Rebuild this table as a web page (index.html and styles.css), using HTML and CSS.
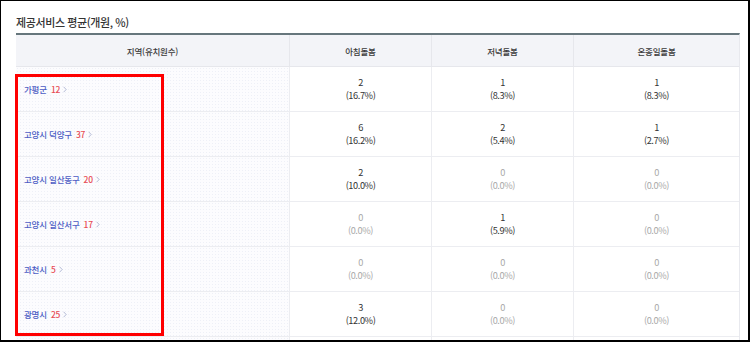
FILE: index.html
```html
<!DOCTYPE html>
<html lang="ko">
<head>
<meta charset="utf-8">
<link rel="stylesheet" href="styles.css">
</head>
<body>
<div class="frame">
  <h2 class="title">제공서비스 평균(개원, %)</h2>
  <div class="table">
    <div class="th">지역(유치원수)</div>
    <div class="th">아침돌봄</div>
    <div class="th">저녁돌봄</div>
    <div class="th last">온종일돌봄</div>

    <div class="td region"><span class="name">가평군</span><span class="cnt">12</span><svg class="chev" width="4" height="7" viewBox="0 0 4 7"><path d="M0.6 0.8 L3.2 3.5 L0.6 6.2" fill="none" stroke="currentColor" stroke-width="0.8"/></svg></div>
    <div class="td"><span>2</span><span>(16.7%)</span></div>
    <div class="td"><span>1</span><span>(8.3%)</span></div>
    <div class="td last"><span>1</span><span>(8.3%)</span></div>

    <div class="td region"><span class="name">고양시 덕양구</span><span class="cnt">37</span><svg class="chev" width="4" height="7" viewBox="0 0 4 7"><path d="M0.6 0.8 L3.2 3.5 L0.6 6.2" fill="none" stroke="currentColor" stroke-width="0.8"/></svg></div>
    <div class="td"><span>6</span><span>(16.2%)</span></div>
    <div class="td"><span>2</span><span>(5.4%)</span></div>
    <div class="td last"><span>1</span><span>(2.7%)</span></div>

    <div class="td region"><span class="name">고양시 일산동구</span><span class="cnt">20</span><svg class="chev" width="4" height="7" viewBox="0 0 4 7"><path d="M0.6 0.8 L3.2 3.5 L0.6 6.2" fill="none" stroke="currentColor" stroke-width="0.8"/></svg></div>
    <div class="td"><span>2</span><span>(10.0%)</span></div>
    <div class="td zero"><span>0</span><span>(0.0%)</span></div>
    <div class="td zero last"><span>0</span><span>(0.0%)</span></div>

    <div class="td region"><span class="name">고양시 일산서구</span><span class="cnt">17</span><svg class="chev" width="4" height="7" viewBox="0 0 4 7"><path d="M0.6 0.8 L3.2 3.5 L0.6 6.2" fill="none" stroke="currentColor" stroke-width="0.8"/></svg></div>
    <div class="td zero"><span>0</span><span>(0.0%)</span></div>
    <div class="td"><span>1</span><span>(5.9%)</span></div>
    <div class="td zero last"><span>0</span><span>(0.0%)</span></div>

    <div class="td region"><span class="name">과천시</span><span class="cnt">5</span><svg class="chev" width="4" height="7" viewBox="0 0 4 7"><path d="M0.6 0.8 L3.2 3.5 L0.6 6.2" fill="none" stroke="currentColor" stroke-width="0.8"/></svg></div>
    <div class="td zero"><span>0</span><span>(0.0%)</span></div>
    <div class="td zero"><span>0</span><span>(0.0%)</span></div>
    <div class="td zero last"><span>0</span><span>(0.0%)</span></div>

    <div class="td region"><span class="name">광명시</span><span class="cnt">25</span><svg class="chev" width="4" height="7" viewBox="0 0 4 7"><path d="M0.6 0.8 L3.2 3.5 L0.6 6.2" fill="none" stroke="currentColor" stroke-width="0.8"/></svg></div>
    <div class="td"><span>3</span><span>(12.0%)</span></div>
    <div class="td zero"><span>0</span><span>(0.0%)</span></div>
    <div class="td zero last"><span>0</span><span>(0.0%)</span></div>

    <div class="td region"></div>
    <div class="td"></div>
    <div class="td"></div>
    <div class="td last"></div>
  </div>
  <div class="highlight"></div>
</div>
</body>
</html>
```

FILE: styles.css
```css
html, body {
  margin: 0;
  padding: 0;
  background: #fff;
}

body {
  font-family: "Noto Sans CJK KR", "Noto Sans", sans-serif;
  color: #333;
}

.frame {
  position: relative;
  width: 750px;
  height: 342px;
  box-sizing: border-box;
  border: solid #000;
  border-width: 1px 2px 2px 1px;
  padding: 0 0 0 15px;
  overflow: hidden;
  background: #fff;
}

.title {
  margin: 13px 0 0;
  font-size: 11px;
  line-height: 16px;
  font-weight: 500;
  letter-spacing: -0.4px;
  color: #333;
}

.table {
  margin-top: 3px;
  width: 724px;
  box-sizing: border-box;
  display: grid;
  grid-template-columns: 274px 142px 142px 165px;
  border-top: 2px solid #66767c;
  border-right: 1px solid #e8e9ee;
}

.th {
  height: 32px;
  box-sizing: border-box;
  background: #f3f4f8;
  border-bottom: 1px solid #e6e7ec;
  border-right: 1px solid #e6e7ec;
  display: flex;
  align-items: center;
  justify-content: center;
  font-size: 8.5px;
  font-weight: 500;
  letter-spacing: -0.2px;
  color: #3a3a3a;
}

.td {
  height: 45px;
  box-sizing: border-box;
  border-bottom: 1px solid #ecedf1;
  border-right: 1px solid #ecedf1;
  display: flex;
  flex-direction: column;
  align-items: center;
  justify-content: center;
  font-size: 9.2px;
  line-height: 13px;
  letter-spacing: -0.4px;
  color: #333;
}

.last {
  border-right: none;
}

.td.zero {
  color: #a9a9a9;
}

.td.region {
  flex-direction: row;
  justify-content: flex-start;
  padding-left: 8px;
  background-color: #fcfcfe;
  background-image: radial-gradient(circle, #eef0f7 0.7px, transparent 0.9px);
  background-size: 3px 3px;
  font-size: 8.5px;
  font-weight: 500;
  letter-spacing: -0.2px;
}

.name {
  color: #4d5cc4;
}

.cnt {
  color: #e84c55;
  margin-left: 4px;
}

.chev {
  margin-left: 3px;
  color: #a3abcc;
}

.highlight {
  position: absolute;
  left: 14px;
  top: 73px;
  width: 149px;
  height: 262px;
  box-sizing: border-box;
  border: 3px solid #ff0000;
}
```
